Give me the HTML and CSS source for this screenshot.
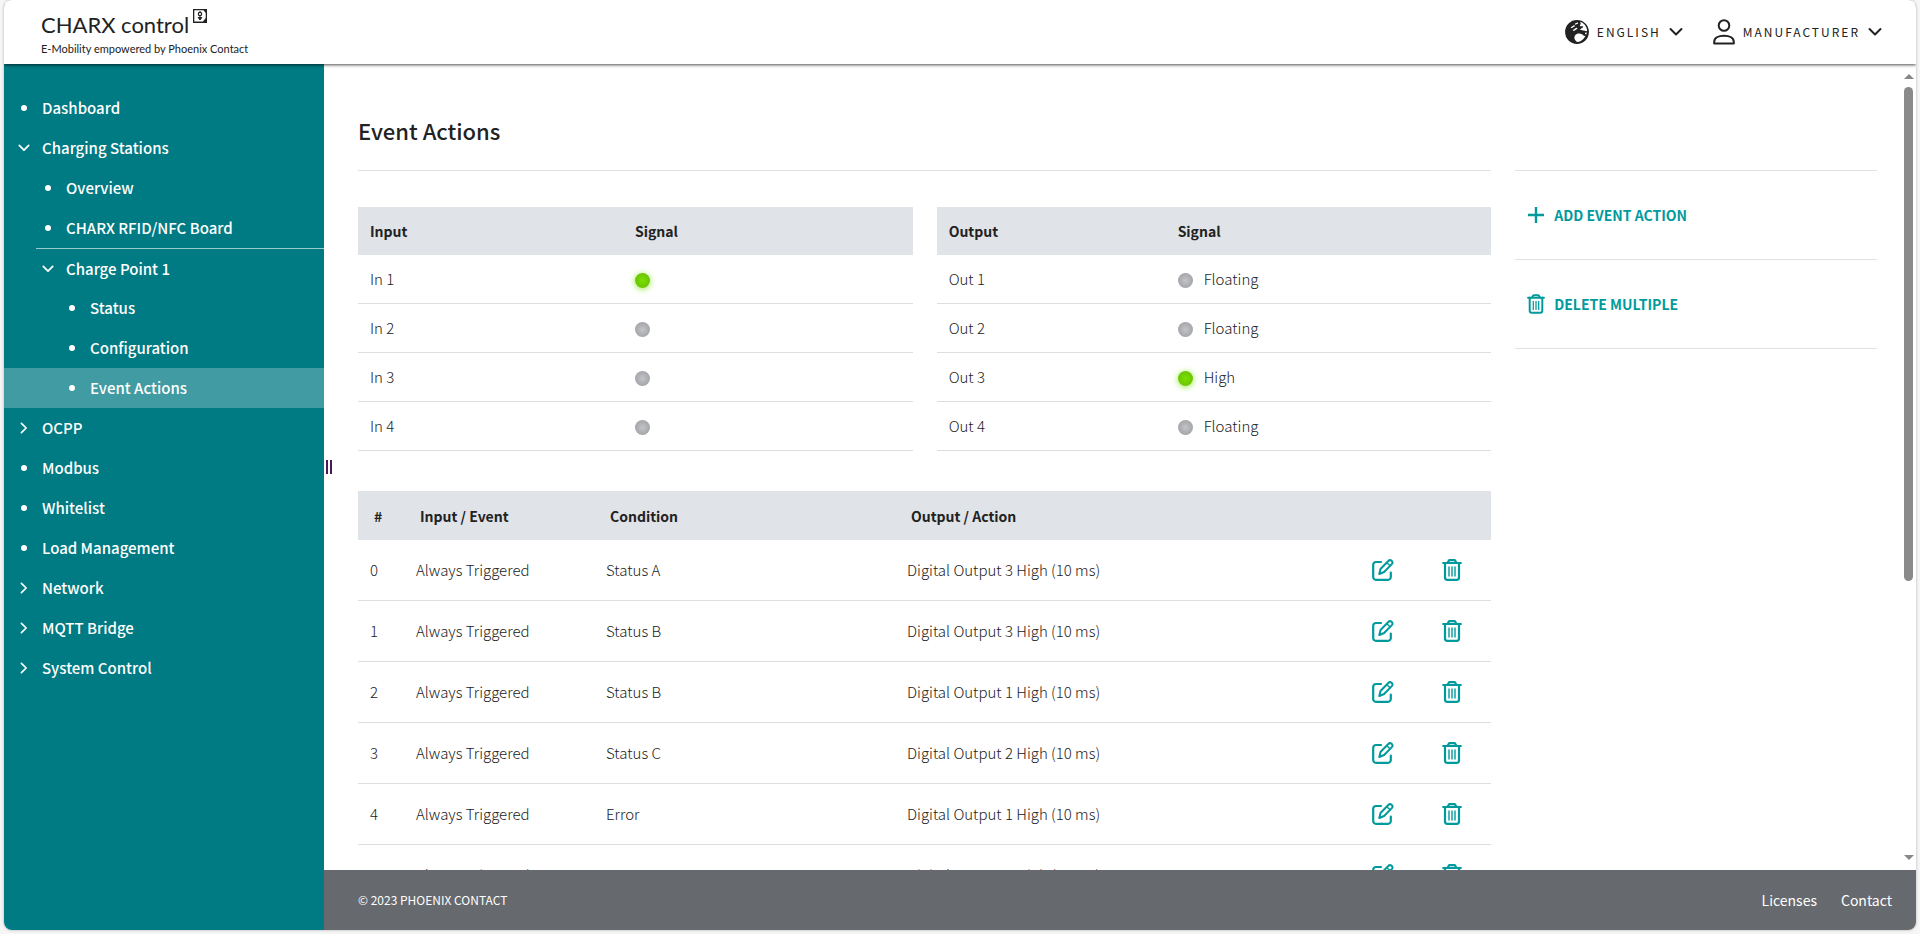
FILE: index.html
```
<!DOCTYPE html>
<html lang="en">
<head>
  <meta charset="UTF-8">
  <title>CHARX control - Event Actions</title>
  <link rel="stylesheet" href="styles.css">
</head>
<body>

  <!-- icon sprites -->
  <svg class="sprites" aria-hidden="true">
    <symbol id="chevron" viewBox="0 0 14 10">
      <path d="M1.500 2l5.500 5.500L12.500 2" fill="none" stroke="currentColor" stroke-width="2" stroke-linecap="round" stroke-linejoin="round"/>
    </symbol>
    <symbol id="trash" viewBox="0 0 20 22">
      <g fill="none" stroke="currentColor" stroke-width="2.200" stroke-linecap="round" stroke-linejoin="round">
        <path d="M1.200 4h17.600"/>
        <path d="M5.500 3.800L7.200 1.200h5.600l1.700 2.600"/>
        <path d="M3 4v14.500A2.300 2.300 0 0 0 5.300 20.800h9.400a2.300 2.300 0 0 0 2.300-2.300V4"/>
        <path d="M7 8v9M10 8v9M13 8v9" stroke-width="1.400"/>
      </g>
    </symbol>
    <symbol id="edit" viewBox="0 0 22 22">
      <g fill="none" stroke="currentColor" stroke-width="2.200" stroke-linecap="round" stroke-linejoin="round">
        <path d="M9 3H4a2.800 2.800 0 0 0-2.800 2.800v12.200a2.800 2.800 0 0 0 2.800 2.800h12a2.800 2.800 0 0 0 2.800-2.800v-4.500"/>
        <path d="M7.300 15l1.200-5L16.300 2a2.300 2.300 0 0 1 3.500 3.100L12.100 13z" stroke-width="2"/>
        <path d="M14.800 3.700l3.300 3" stroke-width="1.500"/>
      </g>
    </symbol>
  </svg>

  <div class="app">
    <header class="topbar">
      <a class="logo" href="#">
        <span class="logo-name">CHARX control
          <svg class="logo-mark" viewBox="0 0 14 14">
            <rect width="14" height="14" fill="#222"/>
            <path d="M1.300 1.300h9.200L12.700 4v5l-2.700 3.600H1.300z" fill="#fff"/>
            <circle cx="7" cy="5" r="1.700" fill="none" stroke="#222" stroke-width="1.200"/>
            <path d="M7 2v1.500M7 6.500V9M5.200 8.500L7 11l1.800-2.500z" fill="#222" stroke="#222" stroke-width="1"/>
          </svg>
        </span>
        <span class="logo-claim">E-Mobility empowered by Phoenix Contact</span>
      </a>
      <div class="topbar-menus">
        <button class="menu" type="button">
          <svg class="globe" viewBox="0 0 24 24">
            <circle cx="12" cy="12" r="11" fill="#222" stroke="#222" stroke-width="1.800"/>
            <path d="M15 1.800c4 1.200 7 4.700 7.200 9.200-1.700.5-2.700-.5-4-.4-1.300-.9-2.300-.4-3.600-.9 1.200-1.300 3-1.500 3.600-3-.8-1.200-2.300 0-3.400-.6.400-1.500 1.700-2.300.2-4.300z" fill="#fff"/>
            <path d="M10 15.500c1.700-2.200 4.800-2.400 7-1.200 1.300.7 1.500 2 3.500 1.500-1.200 2.800-4 5.700-7.800 6.200-2.500-.7-4.300-3.800-2.700-6.500z" fill="#fff"/>
            <path d="M20 12.800l2-.3-.8 2-1.200-.5z" fill="#fff"/>
            <path d="M6.500 7.500c1-.3 1.700-1.500 2.800-1.700M8.500 10.200c1.200 0 1.800-1.700 3.200-1.700M10.500 4l2-.8" fill="none" stroke="#fff" stroke-width="1.300" stroke-linecap="round"/>
          </svg>
          <span class="menu-label">English</span>
          <svg class="chevron"><use href="#chevron"/></svg>
        </button>
        <button class="menu" type="button">
          <svg class="user" viewBox="0 0 22 26">
            <g fill="none" stroke="#222" stroke-width="2">
              <circle cx="11" cy="6.500" r="5.300"/>
              <path d="M1.200 24.500v-1.500c0-4 4-6.300 9.800-6.300s9.800 2.300 9.800 6.300v1.500z" stroke-linejoin="round"/>
            </g>
          </svg>
          <span class="menu-label">Manufacturer</span>
          <svg class="chevron"><use href="#chevron"/></svg>
        </button>
      </div>
    </header>

    <div class="body">
      <nav class="sidebar">
        <a class="item" href="#"><i class="bullet"></i>Dashboard</a>
        <a class="item" href="#"><svg class="arrow open"><use href="#chevron"/></svg>Charging Stations</a>
        <div class="sub">
          <a class="item" href="#"><i class="bullet"></i>Overview</a>
          <a class="item" href="#"><i class="bullet"></i>CHARX RFID/NFC Board</a>
          <a class="item divided" href="#"><svg class="arrow open"><use href="#chevron"/></svg>Charge Point 1</a>
        </div>
        <div class="subsub">
          <a class="item" href="#"><i class="bullet"></i>Status</a>
          <a class="item" href="#"><i class="bullet"></i>Configuration</a>
          <a class="item active" href="#"><i class="bullet"></i>Event Actions</a>
        </div>
        <a class="item" href="#"><svg class="arrow"><use href="#chevron"/></svg>OCPP</a>
        <a class="item" href="#"><i class="bullet"></i>Modbus</a>
        <a class="item" href="#"><i class="bullet"></i>Whitelist</a>
        <a class="item" href="#"><i class="bullet"></i>Load Management</a>
        <a class="item" href="#"><svg class="arrow"><use href="#chevron"/></svg>Network</a>
        <a class="item" href="#"><svg class="arrow"><use href="#chevron"/></svg>MQTT Bridge</a>
        <a class="item" href="#"><svg class="arrow"><use href="#chevron"/></svg>System Control</a>
        <span class="resizer"></span>
      </nav>

      <div class="page">
        <div class="viewport">
          <main class="content">
            <h1>Event Actions</h1>
            <div class="columns">
              <div class="main">
                <div class="signals">
                  <table class="signal-table inputs">
                    <thead>
                      <tr><th>Input</th><th>Signal</th></tr>
                    </thead>
                    <tbody>
                      <tr><td>In 1</td><td><span class="led on"></span></td></tr>
                      <tr><td>In 2</td><td><span class="led"></span></td></tr>
                      <tr><td>In 3</td><td><span class="led"></span></td></tr>
                      <tr><td>In 4</td><td><span class="led"></span></td></tr>
                    </tbody>
                  </table>
                  <table class="signal-table outputs">
                    <thead>
                      <tr><th>Output</th><th>Signal</th></tr>
                    </thead>
                    <tbody>
                      <tr><td>Out 1</td><td><span class="led"></span>Floating</td></tr>
                      <tr><td>Out 2</td><td><span class="led"></span>Floating</td></tr>
                      <tr><td>Out 3</td><td><span class="led on"></span>High</td></tr>
                      <tr><td>Out 4</td><td><span class="led"></span>Floating</td></tr>
                    </tbody>
                  </table>
                </div>

                <table class="event-table">
                  <colgroup>
                    <col class="col-id"><col class="col-event"><col class="col-condition"><col><col class="col-edit"><col class="col-delete">
                  </colgroup>
                  <thead>
                    <tr><th>#</th><th>Input / Event</th><th>Condition</th><th>Output / Action</th><th></th><th></th></tr>
                  </thead>
                  <tbody id="events"></tbody>
                </table>
              </div>

              <aside class="actions">
                <button type="button">
                  <svg class="plus" viewBox="0 0 18 18"><path d="M9 1v16M1 9h16" stroke="currentColor" stroke-width="2.400"/></svg>
                  Add event action
                </button>
                <button type="button">
                  <svg class="bin"><use href="#trash"/></svg>
                  Delete multiple
                </button>
              </aside>
            </div>
          </main>
          <div class="scrollbar">
            <span class="scroll-up"></span>
            <span class="scroll-track"><span class="scroll-thumb"></span></span>
            <span class="scroll-down"></span>
          </div>
        </div>

        <footer class="footer">
          <span class="copyright">© 2023 PHOENIX CONTACT</span>
          <a href="#">Licenses</a>
          <a href="#">Contact</a>
        </footer>
      </div>
    </div>
  </div>

  <script>
    const events = [
      ["Always Triggered", "Status A", "Digital Output 3 High (10 ms)"],
      ["Always Triggered", "Status B", "Digital Output 3 High (10 ms)"],
      ["Always Triggered", "Status B", "Digital Output 1 High (10 ms)"],
      ["Always Triggered", "Status C", "Digital Output 2 High (10 ms)"],
      ["Always Triggered", "Error", "Digital Output 1 High (10 ms)"],
      ["Always Triggered", "Status A", "Digital Output 2 High (10 ms)"]
    ];

    document.getElementById("events").innerHTML = events.map((row, i) => `
      <tr>
        <td>${i}</td>
        <td>${row[0]}</td>
        <td>${row[1]}</td>
        <td>${row[2]}</td>
        <td><button type="button" aria-label="Edit ${i}"><svg class="edit"><use href="#edit"/></svg></button></td>
        <td><button type="button" aria-label="Delete ${i}"><svg class="trash"><use href="#trash"/></svg></button></td>
      </tr>`).join("");
  </script>

</body>
</html>
```

FILE: styles.css
```
* {
  box-sizing: border-box;
}

body {
  margin: 0;
  background: #f6f6f6;
  color: #222;
  font-family: "Source Sans Pro", "Noto Sans CJK SC", "Noto Sans", sans-serif;
  font-size: 15px;
  line-height: 24px;
}

button {
  padding: 0;
  border: none;
  background: none;
  color: inherit;
  font: inherit;
  cursor: pointer;
}

a {
  color: inherit;
  text-decoration: none;
}

svg {
  display: block;
  flex: none;
}

.sprites {
  position: absolute;
  width: 0;
  height: 0;
}

.app {
  display: flex;
  flex-direction: column;
  height: calc(100vh - 4px);
  margin: 0 4px 4px;
  border-radius: 8px;
  overflow: hidden;
  background: #fff;
  box-shadow: 0 0 3px rgba(0, 0, 0, 0.3);
}

/* top bar */
.topbar {
  position: relative;
  z-index: 1;
  display: flex;
  flex: none;
  justify-content: space-between;
  height: 64px;
  padding: 0 34px 0 37px;
  background: #fff;
  box-shadow: 0 1px 3px rgba(0, 0, 0, 0.7);
}

.logo {
  display: flex;
  flex-direction: column;
  padding-top: 8px;
  font-family: Lato, sans-serif;
}

.logo-name {
  display: flex;
  gap: 4px;
  font-size: 22px;
  line-height: 34px;
}

.logo-mark {
  width: 14px;
  height: 14px;
  margin-top: 1px;
}

.logo-claim {
  font-size: 11px;
  line-height: 13px;
}

.topbar-menus {
  display: flex;
  gap: 30px;
}

.menu {
  display: flex;
  align-items: center;
  gap: 8px;
}

.menu-label {
  font-size: 12px;
  letter-spacing: 2px;
  text-transform: uppercase;
}

.globe {
  width: 24px;
  height: 24px;
}

.user {
  width: 22px;
  height: 26px;
}

.chevron {
  width: 14px;
  height: 10px;
}

.body {
  display: flex;
  flex: 1;
  min-height: 0;
}

/* navigation */
.sidebar {
  position: relative;
  flex: none;
  width: 320px;
  padding-top: 24px;
  background: #007a83;
  color: #fff;
  font-weight: 500;
}

.item {
  display: flex;
  align-items: center;
  gap: 10px;
  height: 40px;
  padding-left: 12px;
}

.sub .item {
  padding-left: 36px;
}

.sub .divided {
  margin-left: 32px;
  padding-left: 4px;
  border-top: 1px solid rgba(255, 255, 255, 0.6);
}

.subsub .item {
  padding-left: 60px;
}

.item.active {
  background: rgba(255, 255, 255, 0.25);
}

.bullet {
  width: 6px;
  height: 6px;
  margin: 0 5px;
  border-radius: 50%;
  background: #fff;
}

.arrow {
  width: 12px;
  height: 10px;
  margin: 0 2px;
  transform: rotate(-90deg);
}

.arrow.open {
  transform: none;
}

.resizer {
  position: absolute;
  top: 396px;
  right: -8px;
  width: 6px;
  height: 14px;
  border: solid #4a1a55;
  border-width: 0 2px;
}

/* page */
.page {
  display: flex;
  flex: 1;
  flex-direction: column;
  min-width: 0;
}

.viewport {
  display: flex;
  flex: 1;
  min-height: 0;
}

.content {
  flex: 1;
  min-width: 0;
  padding: 48px 24px 0 34px;
  overflow-y: auto;
  scrollbar-width: none;
}

h1 {
  margin: 0 0 22px;
  font-size: 22px;
  font-weight: 500;
  line-height: 36px;
}

.columns {
  display: grid;
  grid-template-columns: repeat(12, 1fr);
  align-items: start;
  gap: 24px;
}

.main {
  grid-column: span 9;
  padding-top: 36px;
  border-top: 1px solid #dfe1e4;
}

.signals {
  display: grid;
  grid-template-columns: 1fr 1fr;
  gap: 24px;
  margin-bottom: 40px;
}

table {
  width: 100%;
  border-collapse: separate;
  border-spacing: 0;
  table-layout: fixed;
}

th,
td {
  height: 49px;
  padding: 0 12px;
  border-bottom: 1px solid #dcdee0;
  text-align: left;
  font-weight: 300;
}

th {
  border-bottom: none;
  background: #e0e3e8;
  font-size: 14px;
  font-weight: 700;
}

.signal-table th {
  height: 48px;
}

.inputs th:first-child {
  width: 265px;
}

.outputs th:first-child {
  width: 229px;
}

.led {
  display: inline-block;
  width: 15px;
  height: 15px;
  margin-right: 11px;
  border-radius: 50%;
  background: radial-gradient(#c3c4c8, #98999d);
  vertical-align: middle;
}

.led.on {
  background: radial-gradient(#7be000, #64b900);
  box-shadow: 0 1px 6px #8fe83a;
}

.event-table th {
  padding-left: 16px;
}

.event-table td {
  height: 61px;
}

.event-table button {
  display: block;
  color: #009a9c;
}

.col-id {
  width: 46px;
}

.col-event {
  width: 190px;
}

.col-condition {
  width: 301px;
}

.col-edit {
  width: 70px;
}

.col-delete {
  width: 61px;
}

.edit {
  width: 22px;
  height: 22px;
}

.trash {
  width: 20px;
  height: 22px;
}

/* side actions */
.actions {
  grid-column: span 3;
  border-top: 1px solid #dfe1e4;
}

.actions button {
  display: flex;
  align-items: center;
  gap: 9px;
  width: 100%;
  height: 89px;
  padding-left: 12px;
  border-bottom: 1px solid #dfe1e4;
  color: #009a9c;
  font-size: 14px;
  font-weight: 700;
  text-transform: uppercase;
}

.plus,
.bin {
  width: 18px;
  height: 20px;
}

/* scrollbar */
.scrollbar {
  display: flex;
  flex: none;
  flex-direction: column;
  align-items: center;
  width: 15px;
  padding: 10px 0;
}

.scroll-up,
.scroll-down {
  border: 5px solid transparent;
}

.scroll-up {
  border-top: none;
  border-bottom-color: #888;
}

.scroll-down {
  border-bottom: none;
  border-top-color: #888;
}

.scroll-track {
  flex: 1;
  width: 9px;
  margin: 8px 0;
}

.scroll-thumb {
  display: block;
  height: 65%;
  border-radius: 5px;
  background: #8a8a8a;
}

/* footer */
.footer {
  display: flex;
  flex: none;
  align-items: center;
  gap: 24px;
  height: 60px;
  padding: 0 24px 0 34px;
  background: #66696d;
  color: #fff;
  font-size: 14px;
}

.copyright {
  margin-right: auto;
  font-size: 12px;
}
```
